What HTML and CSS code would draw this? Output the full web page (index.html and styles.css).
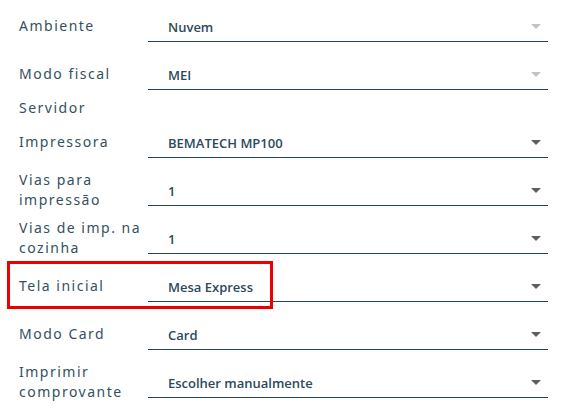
FILE: index.html
```html
<!DOCTYPE html>
<html lang="pt">
<head>
<meta charset="utf-8">
<link rel="stylesheet" href="styles.css">
</head>
<body>
<div class="form">
  <div class="row">
    <div class="label">Ambiente</div>
    <div class="field disabled"><span class="value">Nuvem</span><span class="arrow"></span></div>
  </div>
  <div class="row">
    <div class="label">Modo fiscal</div>
    <div class="field disabled"><span class="value">MEI</span><span class="arrow"></span></div>
  </div>
  <div class="row short">
    <div class="label">Servidor</div>
  </div>
  <div class="row">
    <div class="label">Impressora</div>
    <div class="field"><span class="value">BEMATECH MP100</span><span class="arrow"></span></div>
  </div>
  <div class="row">
    <div class="label">Vias para impressão</div>
    <div class="field"><span class="value">1</span><span class="arrow"></span></div>
  </div>
  <div class="row">
    <div class="label">Vias de imp. na cozinha</div>
    <div class="field"><span class="value">1</span><span class="arrow"></span></div>
  </div>
  <div class="row highlighted">
    <div class="label">Tela inicial</div>
    <div class="field"><span class="value">Mesa Express</span><span class="arrow"></span></div>
    <div class="mark"></div>
  </div>
  <div class="row">
    <div class="label">Modo Card</div>
    <div class="field"><span class="value">Card</span><span class="arrow"></span></div>
  </div>
  <div class="row">
    <div class="label">Imprimir comprovante</div>
    <div class="field"><span class="value">Escolher manualmente</span><span class="arrow"></span></div>
  </div>
</div>
</body>
</html>
```

FILE: styles.css
```css
html, body {
  margin: 0;
  padding: 0;
  background: #ffffff;
}

.form {
  padding: 2px 0 0 19px;
  width: 529px;
}

.row {
  display: flex;
  align-items: center;
  height: 48px;
  position: relative;
}

.row.short {
  height: 20px;
}

.label {
  width: 129px;
  flex: none;
  font-family: "Noto Sans", sans-serif;
  font-size: 14px;
  line-height: 20px;
  letter-spacing: 1.5px;
  color: #34505f;
}

.field {
  width: 400px;
  height: 32px;
  box-sizing: border-box;
  border-bottom: 1px solid #1f4859;
  display: flex;
  align-items: center;
  justify-content: space-between;
  padding: 2px 7px 0 20px;
}

.value {
  font-family: "Open Sans", sans-serif;
  font-weight: 600;
  font-size: 13px;
  color: #2b4a5b;
}

.arrow {
  width: 0;
  height: 0;
  border-left: 5px solid transparent;
  border-right: 5px solid transparent;
  border-top: 5px solid #5e5e5e;
}

.field.disabled .arrow {
  border-top-color: #c4c4c4;
}

.mark {
  position: absolute;
  left: -12px;
  top: -1px;
  width: 266px;
  height: 48px;
  box-sizing: border-box;
  border: 3px solid #ee0000;
}
```
